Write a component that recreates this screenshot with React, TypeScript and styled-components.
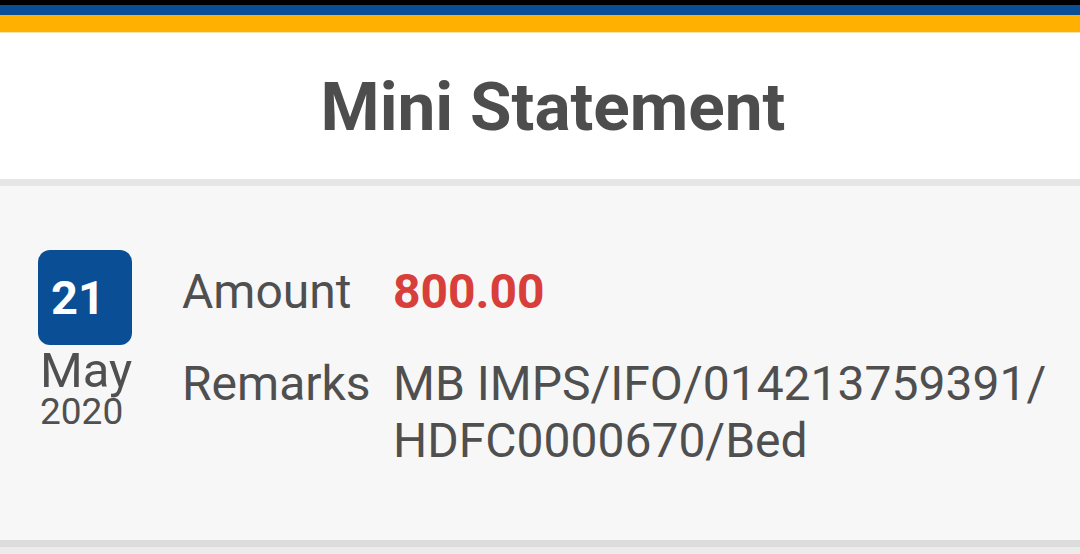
import React from "react";
import styled, { createGlobalStyle } from "styled-components";

const Global = createGlobalStyle`
  html, body { margin: 0; padding: 0; background: #ececec; }
  body { font-family: Roboto, "Liberation Sans", sans-serif; width: 1080px; height: 554px; overflow: hidden; }
`;

const Page = styled.div`
  display: flex;
  flex-direction: column;
  width: 1080px;
  height: 554px;
  & > * { flex-shrink: 0; }
`;

const Stripe = styled.div<{ $c: string; $h: number }>`
  height: ${(p) => p.$h}px;
  background: ${(p) => p.$c};
`;

const Header = styled.header`
  height: 153px;
  background: #ffffff;
  display: flex;
  align-items: center;
  justify-content: center;
  padding-left: 26px;
  box-sizing: border-box;
  border-bottom: 7px solid #e6e6e6;
`;

const Title = styled.h1`
  margin: 0;
  font-size: 67.5px;
  font-weight: 700;
  color: #4d4d4d;
  line-height: 1;
  margin-top: 2px;
`;

const Entry = styled.section`
  height: 361px;
  box-sizing: border-box;
  background: #f7f7f7;
  border-bottom: 7px solid #dcdcdc;
  display: flex;
  align-items: flex-start;
  padding: 64px 0 0 38px;
  gap: 50px;
`;

const DateCol = styled.div`
  width: 94px;
  display: flex;
  flex-direction: column;
  align-items: flex-start;
  color: #505050;
`;

const DayBox = styled.div`
  width: 94px;
  height: 95px;
  box-sizing: border-box;
  padding-right: 14px;
  border-radius: 12px;
  background: #0a4f96;
  color: #fff;
  font-weight: 700;
  font-size: 47px;
  display: flex;
  align-items: center;
  justify-content: center;
  line-height: 1;
`;

const Month = styled.div`
  font-size: 49px;
  line-height: 49px;
  margin-top: 1px;
  margin-left: 2px;
`;

const Year = styled.div`
  font-size: 37px;
  line-height: 32px;
  margin-top: 1px;
  margin-left: 2px;
`;

const Details = styled.div`
  display: grid;
  grid-template-columns: 211px 1fr;
  row-gap: 35px;
  margin-top: 13px;
  font-size: 48px;
  line-height: 57px;
  color: #4f4f4f;
  padding-right: 20px;
`;

const Label = styled.div``;

const Value = styled.div<{ $accent?: boolean }>`
  color: ${(p) => (p.$accent ? "#d83f3a" : "#4f4f4f")};
  font-weight: ${(p) => (p.$accent ? 700 : 400)};
`;

export default function App() {
  return (
    <Page>
      <Global />
      <Stripe $c="#000000" $h={5} />
      <Stripe $c="#0a4f96" $h={10} />
      <Stripe $c="#ffb000" $h={17} />
      <Stripe $c="#f4e3a6" $h={1} />
      <Header>
        <Title>Mini Statement</Title>
      </Header>
      <Entry>
        <DateCol>
          <DayBox>21</DayBox>
          <Month>May</Month>
          <Year>2020</Year>
        </DateCol>
        <Details>
          <Label>Amount</Label>
          <Value $accent>800.00</Value>
          <Label>Remarks</Label>
          <Value>
            MB IMPS/<wbr />IFO/<wbr />014213759391/<wbr />HDFC0000670/<wbr />Bed
          </Value>
        </Details>
      </Entry>
    </Page>
  );
}
